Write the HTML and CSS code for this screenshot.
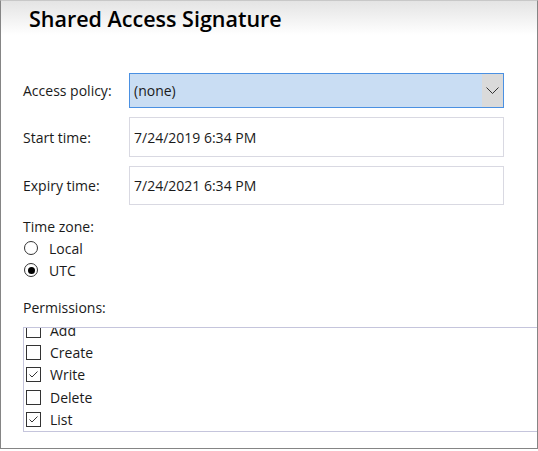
FILE: index.html
```html
<!DOCTYPE html>
<html>
<head>
<meta charset="utf-8">
<link rel="stylesheet" href="styles.css">
</head>
<body>
<div class="window">
  <div class="titlebar"><h1 class="title">Shared Access Signature</h1></div>
  <div class="form">
    <div class="row row-select">
      <span class="label">Access policy:</span>
      <div class="select">
        <span class="select-text">(none)</span>
        <span class="select-btn">
          <svg width="13" height="7" viewBox="0 0 13 7"><path d="M0.5 0.5 L6.5 6.5 L12.5 0.5" fill="none" stroke="#333" stroke-width="1"/></svg>
        </span>
      </div>
    </div>
    <div class="row row-input">
      <span class="label">Start time:</span>
      <div class="input">7/24/2019 6:34 PM</div>
    </div>
    <div class="row row-input">
      <span class="label">Expiry time:</span>
      <div class="input">7/24/2021 6:34 PM</div>
    </div>
  </div>
  <div class="section">
    <div class="section-label tz-label">Time zone:</div>
    <div class="radio"><span class="radio-circle"></span><span>Local</span></div>
    <div class="radio"><span class="radio-circle checked"></span><span>UTC</span></div>
  </div>
  <div class="section perms">
    <div class="section-label">Permissions:</div>
    <div class="listbox">
      <div class="list-inner">
        <div class="item"><span class="cb"></span><span>Add</span></div>
        <div class="item"><span class="cb"></span><span>Create</span></div>
        <div class="item"><span class="cb checked"><svg width="11" height="11" viewBox="0 0 11 11"><path d="M1.5 5.5 L4 8 L9.5 2.5" fill="none" stroke="#333" stroke-width="1"/></svg></span><span>Write</span></div>
        <div class="item"><span class="cb"></span><span>Delete</span></div>
        <div class="item"><span class="cb checked"><svg width="11" height="11" viewBox="0 0 11 11"><path d="M1.5 5.5 L4 8 L9.5 2.5" fill="none" stroke="#333" stroke-width="1"/></svg></span><span>List</span></div>
      </div>
    </div>
  </div>
</div>
</body>
</html>
```
FILE: styles.css
```css
* { box-sizing: border-box; }
html, body { margin: 0; padding: 0; background: #fff; }
body {
  font-family: "Open Sans", "Noto Sans", sans-serif;
  font-size: 14px;
  color: #1a1a1a;
}
.window {
  width: 538px;
  height: 449px;
  border-left: 1px solid #858585;
  border-right: 1px solid #858585;
  border-bottom: 1px solid #858585;
  border-top: 1px solid #c8c8c8;
  overflow: hidden;
  background: #fff;
}
.titlebar {
  height: 40px;
  background: linear-gradient(#e4e4e4, #ffffff 34px);
  padding-left: 28px;
}
.title {
  margin: 0;
  font-size: 21.5px;
  font-weight: 600;
  line-height: 36px;
  color: #000;
  letter-spacing: 0;
}
.form {
  padding: 32px 33px 0 22px;
  display: flex;
  flex-direction: column;
  gap: 9px;
}
.row {
  display: grid;
  grid-template-columns: 106px 1fr;
  align-items: center;
}
.select {
  height: 35px;
  border: 1px solid #4a90e2;
  background: #c9ddf3;
  display: flex;
  align-items: center;
}
.select-text { flex: 1; padding-left: 4px; }
.select-btn {
  width: 21px;
  align-self: stretch;
  background: #dadada;
  display: flex;
  align-items: center;
  justify-content: center;
}
.input {
  height: 40px;
  border: 1px solid #d9d9e2;
  display: flex;
  align-items: center;
  padding-left: 4px;
}
.row-input + .row-input .input { height: 39px; }
.section {
  padding-left: 22px;
  padding-top: 12px;
}
.section-label { line-height: 20px; }
.radio {
  display: flex;
  align-items: center;
  height: 22px;
  gap: 11px;
}
.radio-circle {
  width: 14px;
  height: 14px;
  border: 1px solid #333;
  border-radius: 50%;
  display: flex;
  align-items: center;
  justify-content: center;
  margin-left: 1px;
}
.radio-circle.checked::after {
  content: "";
  width: 7px;
  height: 7px;
  border-radius: 50%;
  background: #000;
}
.perms { padding-top: 17px; }
.listbox {
  margin-top: 9px;
  width: 540px;
  height: 105px;
  border: 1px solid #c5c5dc;
  overflow: hidden;
}
.list-inner {
  margin-top: -9px;
  padding-left: 2px;
}
.item {
  display: flex;
  align-items: center;
  height: 22.4px;
  gap: 9px;
}
.cb {
  width: 15px;
  height: 15px;
  border: 1px solid #333;
  display: flex;
  align-items: center;
  justify-content: center;
}
```
